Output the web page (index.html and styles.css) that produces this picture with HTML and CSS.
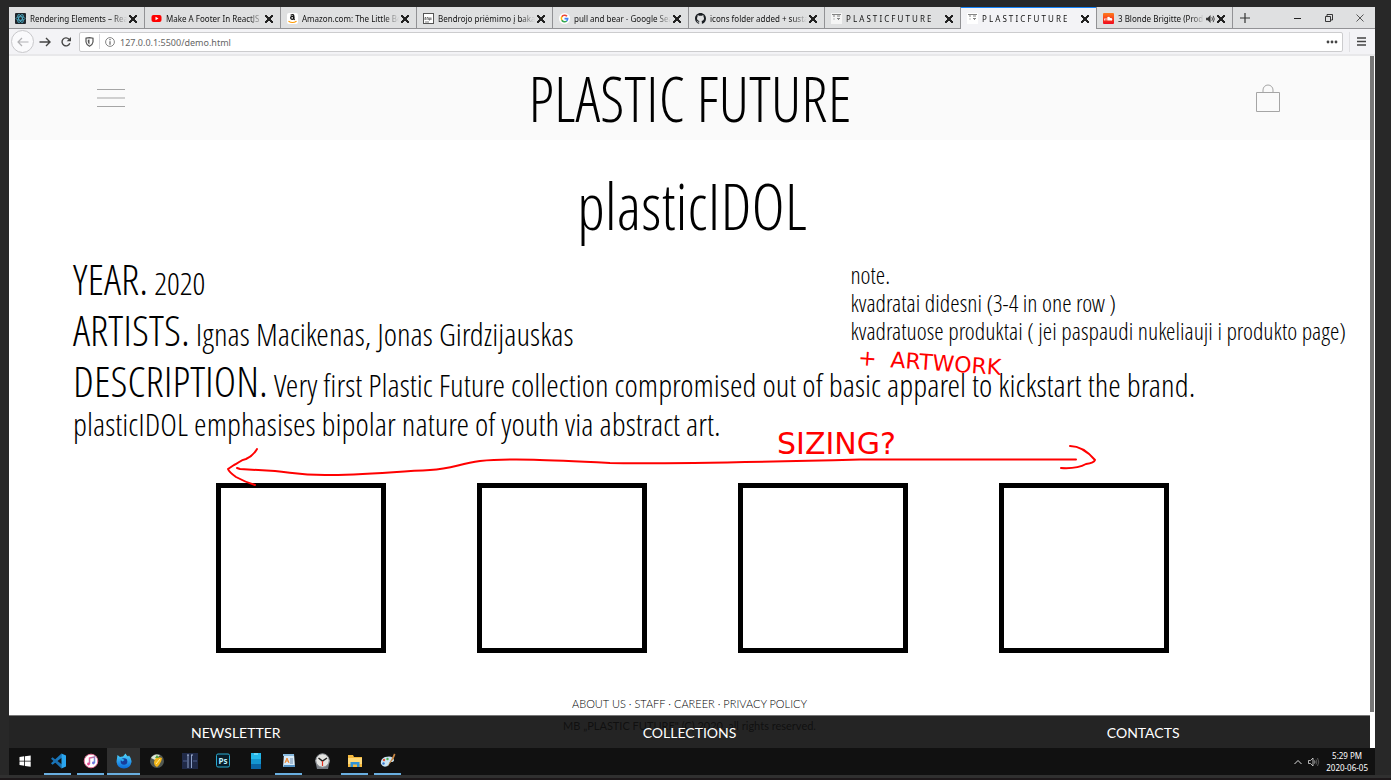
FILE: index.html
```html
<!DOCTYPE html>
<html lang="en">
<head>
<meta charset="utf-8">
<title>PLASTIC FUTURE</title>
<link rel="stylesheet" href="styles.css">
</head>
<body>
<div class="desktop">
  <div class="browser">
    <div class="tabs">
      <div class="tab"><svg class="fav" viewBox="0 0 11 11"><rect width="11" height="11" rx="1" fill="#20262b"/><g fill="none" stroke="#4fb3cc" stroke-width=".8"><ellipse cx="5.500" cy="5.500" rx="4.500" ry="1.800"/><ellipse cx="5.500" cy="5.500" rx="4.500" ry="1.800" transform="rotate(60 5.500 5.500)"/><ellipse cx="5.500" cy="5.500" rx="4.500" ry="1.800" transform="rotate(120 5.500 5.500)"/></g></svg><span class="label">Rendering Elements – React</span><button class="close" aria-label="Close tab"></button></div>
      <div class="tab"><svg class="fav" viewBox="0 0 11 11"><rect x=".5" y="2" width="10" height="7" rx="2" fill="#f00"/><path d="M4.500 3.800v3.400l3-1.700z" fill="#fff"/></svg><span class="label">Make A Footer In ReactJS | 2019</span><button class="close" aria-label="Close tab"></button></div>
      <div class="tab"><svg class="fav" viewBox="0 0 11 11"><rect width="11" height="11" rx="2" fill="#fff"/><circle cx="5.200" cy="4.800" r="1.500" fill="none" stroke="#111" stroke-width="1.300"/><path d="M3.600 2.300Q6.800.6 6.800 3v3l.9.8" fill="none" stroke="#111" stroke-width="1.300"/><path d="M1.500 8.200q4 2.600 8 0" fill="none" stroke="#f90" stroke-width="1.100"/></svg><span class="label">Amazon.com: The Little Book</span><button class="close" aria-label="Close tab"></button></div>
      <div class="tab"><svg class="fav" viewBox="0 0 11 11"><rect x=".5" y=".5" width="10" height="10" fill="#fff" stroke="#555"/><path d="M2 7V4.500h1V7m1-2.500h1V7m1-2.500V7h1V4.500m1 0V7M2 9h4" stroke="#444" stroke-width=".7" fill="none"/></svg><span class="label">Bendrojo priėmimo į bakalauro</span><button class="close" aria-label="Close tab"></button></div>
      <div class="tab"><svg class="fav" viewBox="0 0 11 11"><circle cx="5.500" cy="5.500" r="5.500" fill="#fff"/><g fill="none" stroke-width="1.600"><path d="M8 3.300A3.300 3.300 0 0 0 2.800 3.700" stroke="#ea4335"/><path d="M2.800 3.700a3.300 3.300 0 0 0 0 3.600" stroke="#fbbc05"/><path d="M2.800 7.300a3.300 3.300 0 0 0 4.900.7" stroke="#34a853"/><path d="M5.500 5.600h3.200a3.300 3.300 0 0 1-1 2.400" stroke="#4285f4"/></g></svg><span class="label">pull and bear - Google Search</span><button class="close" aria-label="Close tab"></button></div>
      <div class="tab"><svg class="fav" viewBox="0 0 16 16"><path fill="#1b1f23" d="M8 0C3.580 0 0 3.580 0 8c0 3.540 2.290 6.530 5.470 7.590.4.070.55-.17.55-.38 0-.19-.01-.82-.01-1.490-2.010.37-2.530-.49-2.690-.94-.09-.23-.48-.94-.82-1.130-.28-.15-.68-.52-.01-.53.63-.01 1.080.58 1.230.82.72 1.210 1.870.87 2.330.66.07-.52.28-.87.51-1.070-1.780-.2-3.640-.89-3.640-3.950 0-.87.31-1.590.82-2.150-.08-.2-.36-1.020.08-2.120 0 0 .67-.21 2.200.82a7.500 7.500 0 0 1 4 0c1.530-1.040 2.200-.82 2.200-.82.44 1.100.16 1.920.08 2.120.51.56.82 1.270.82 2.150 0 3.070-1.870 3.750-3.650 3.950.29.25.54.73.54 1.480 0 1.070-.01 1.930-.01 2.200 0 .21.15.46.55.38A8 8 0 0 0 16 8c0-4.420-3.580-8-8-8"/></svg><span class="label">icons folder added + sustainable</span><button class="close" aria-label="Close tab"></button></div>
      <div class="tab"><svg class="fav" viewBox="0 0 11 11"><rect width="11" height="11" fill="#f5f5f5"/><path d="M1 1.500h9M2 3h2m2 0h3M2.500 6h1M6 5.500h3M7 6.500h1" stroke="#777" stroke-width=".9"/></svg><span class="label">P L A S T I C F U T U R E</span><button class="close" aria-label="Close tab"></button></div>
      <div class="tab active"><svg class="fav" viewBox="0 0 11 11"><rect width="11" height="11" fill="#fff"/><path d="M1 1.500h9M2 3h2m2 0h3M2.500 6h1M6 5.500h3M7 6.500h1" stroke="#777" stroke-width=".9"/></svg><span class="label">P L A S T I C F U T U R E</span><button class="close" aria-label="Close tab"></button></div>
      <div class="tab"><svg class="fav" viewBox="0 0 11 11"><defs><linearGradient id="sc" x2="0" y2="1"><stop stop-color="#ff7a1c"/><stop offset="1" stop-color="#f00a1e"/></linearGradient></defs><rect width="11" height="11" rx="1" fill="url(#sc)"/><path d="M1.500 5.500v2M3 5v2.500" stroke="#fff" stroke-width=".8"/><path d="M4.300 7.600V4.300Q6.500 2.800 7 5q2.300-.3 2.300 1.300T8 7.600z" fill="#fff"/></svg><span class="label">3 Blonde Brigitte (Produced)</span><svg class="sound" viewBox="0 0 10 9"><path d="M0 3h2l3-3v9L2 6H0z" fill="#333"/><path d="M6.500 2.500q1.500 2 0 4M8 1q2.500 3.500 0 7" fill="none" stroke="#333"/></svg><button class="close" aria-label="Close tab"></button></div>
      <button class="newtab" aria-label="New tab"><svg width="10" height="10" viewBox="0 0 10 10"><path d="M5 0v10M0 5h10" stroke="#333" stroke-width="1.200"/></svg></button>
      <div class="winctl">
        <button aria-label="Minimize"><svg width="8" height="8" viewBox="0 0 8 8"><path d="M0 4.500h7" stroke="#222"/></svg></button>
        <button aria-label="Restore"><svg width="8" height="8" viewBox="0 0 8 8"><path d="M.5 2.500h5v5h-5zM2 2V.5h5.500V6H6" fill="none" stroke="#222" stroke-width=".9"/></svg></button>
        <button aria-label="Close"><svg width="8" height="8" viewBox="0 0 8 8"><path d="M.5.5l7 7m0-7l-7 7" stroke="#333" stroke-width=".8"/></svg></button>
      </div>
    </div>
    <div class="toolbar">
      <button class="back" aria-label="Back"><svg width="12" height="10" viewBox="0 0 12 10"><path d="M11.500 5H1M5 1L1 5l4 4" fill="none" stroke="#b0b0b3" stroke-width="1.200"/></svg></button>
      <button class="nav" aria-label="Forward"><svg width="12" height="10" viewBox="0 0 12 10"><path d="M.5 5H11M7 1l4 4-4 4" fill="none" stroke="#444" stroke-width="1.400"/></svg></button>
      <button class="nav" aria-label="Reload"><svg width="12" height="12" viewBox="0 0 12 12"><path d="M9.800 7.300A4 4 0 1 1 9 3.200" fill="none" stroke="#444" stroke-width="1.400"/><path d="M11 1v4.300H6.700z" fill="#444"/></svg></button>
      <div class="urlbar">
        <svg width="9" height="10" viewBox="0 0 9 10"><path d="M1 1.200L4.500.7 8 1.200V5Q7.500 8 4.500 9.300 1.500 8 1 5z" fill="none" stroke="#555" stroke-width="1.200"/><path d="M4.500 2.500v5Q2.800 6.500 2.800 4.800v-2z" fill="#555"/></svg>
        <i class="sep"></i>
        <svg width="10" height="10" viewBox="0 0 10 10"><circle cx="5" cy="5" r="4.400" fill="none" stroke="#777" stroke-width=".9"/><path d="M5 2v1.200M5 4.200v3.600" stroke="#666" stroke-width="1.200"/></svg>
        <input class="url" type="text" aria-label="Address" value="127.0.0.1:5500/demo.html">
        <button class="dots" aria-label="Page actions"><svg width="12" height="4" viewBox="0 0 12 4"><g fill="#444"><circle cx="2" cy="2" r="1.400"/><circle cx="6" cy="2" r="1.400"/><circle cx="10" cy="2" r="1.400"/></g></svg></button>
      </div>
      <button class="menu" aria-label="Application menu"><svg width="9" height="9" viewBox="0 0 9 9"><path d="M0 1h9M0 4.500h9M0 8h9" stroke="#444" stroke-width="1.300"/></svg></button>
    </div>

    <div class="page">
      <header class="site-head">
        <button aria-label="Menu"><svg width="28" height="20" viewBox="0 0 28 20"><path d="M0 1.500h28M0 10h28M0 18.500h28" stroke="#a5a5a5"/></svg></button>
        <a class="brand" href="#">PLASTIC FUTURE</a>
        <button aria-label="Shopping bag"><svg width="26" height="29" viewBox="0 0 26 29"><path d="M1.500 8.500h23v19h-23zM8 8.500V6a5 5 0 0 1 10 0v2.500" fill="none" stroke="#a5a5a5"/></svg></button>
      </header>
      <main>
        <h1>plasticIDOL</h1>
        <section class="info">
          <div class="facts">
            <p><b>YEAR.</b> 2020</p>
            <p><b>ARTISTS.</b> Ignas Macikenas, Jonas Girdzijauskas</p>
          </div>
          <div class="note">note.<br>kvadratai didesni (3-4 in one row )<br>kvadratuose produktai ( jei paspaudi nukeliauji i produkto page)</div>
          <p class="desc"><b>DESCRIPTION.</b> Very first Plastic Future collection compromised out of basic apparel to kickstart the brand.<br>plasticIDOL emphasises bipolar nature of youth via abstract art.</p>
        </section>
        <section class="squares"><div class="square"></div><div class="square"></div><div class="square"></div><div class="square"></div></section>
        <div class="legal">
          <nav><a href="#">ABOUT US</a> · <a href="#">STAFF</a> · <a href="#">CAREER</a> · <a href="#">PRIVACY POLICY</a></nav>
          <p>MB „PLASTIC FUTURE" (C) 2020, all rights reserved.</p>
        </div>
      </main>
      <footer class="bar"><a href="#">NEWSLETTER</a><a href="#">COLLECTIONS</a><a href="#">CONTACTS</a></footer>
      <div class="scroll"></div>
      <svg class="arrow" width="880" height="50" viewBox="220 440 880 50"><g fill="none" stroke="#f00" stroke-width="2" stroke-linecap="round" stroke-linejoin="round"><path d="M257 449Q253 456 246 459C240 460 239 463 234 465L228 469Q229 472 236 477 245 482 255 485"/><path d="M237 468L240 469 275 471C295 473 300 475 325 475 360 475 390 472 430 470 452 469 458 464 480 461 510 458 550 460 610 463 680 464 760 462 860 459.500H1076"/><path d="M1070 446Q1083 446 1095 460 1094 463 1086 464 1077 469 1061 468"/></g></svg>
      <div class="scribble artwork"><span>+</span><span>ARTWORK</span></div>
      <div class="scribble sizing">SIZING?</div>
    </div>
  </div>

  <div class="taskbar">
    <button aria-label="Start"><svg viewBox="0 0 16 16"><path fill="#fff" d="M2.500 4l4.700-.7v4.400H2.500zM8 3.200l5.700-.8v5.300H8zM2.500 8.400h4.700v4.400l-4.700-.7zM8 8.400h5.700v5.300L8 12.900z"/></svg></button>
    <button class="open" aria-label="Visual Studio Code"><svg viewBox="0 0 16 16"><path fill="#1878be" d="M11.500.5L1 10.200l1.500 1.600L12 4.500z"/><path fill="#1a6fb0" d="M2.500 4.200L1 5.700l10.500 9.800.5-4z"/><path fill="#2aa5ef" d="M11.500.5L16 2.500v11l-4.500 2z"/></svg></button>
    <button class="open" aria-label="iTunes"><svg viewBox="0 0 16 16"><defs><linearGradient id="it" x2="1" y2="1"><stop stop-color="#f5558a"/><stop offset="1" stop-color="#4aa8ee"/></linearGradient></defs><circle cx="8" cy="8" r="6.800" fill="#fff" stroke="#e9759c"/><path d="M6.500 11V5l5-1v6" fill="none" stroke="url(#it)" stroke-width="1.500"/><circle cx="5.500" cy="11" r="1.400" fill="#ec4b91"/><circle cx="10.400" cy="10" r="1.400" fill="#6f76df"/></svg></button>
    <button class="open current" aria-label="Firefox"><svg viewBox="0 0 16 16"><defs><linearGradient id="fx" x2="0" y2="1"><stop stop-color="#52d9ff"/><stop offset="1" stop-color="#0867d9"/></linearGradient></defs><path fill="url(#fx)" d="M1.500 2L4 4q1.500-.8 3-.5L9.500.5q1 2 2.500 3l1-1Q16 6 15.500 9 14.500 15 8 15.500 1 15 .5 8.500z"/><circle cx="8" cy="8.500" r="3.300" fill="#173c9a"/><path d="M3.500 6q3-1 5 1l-2 1.500z" fill="#28aef0"/></svg></button>
    <button aria-label="FL Studio"><svg viewBox="0 0 16 16"><circle cx="8" cy="8" r="7" fill="#515852"/><path d="M2 5q3-5 9-3L6 7z" fill="#dde8d8"/><path d="M6 6q3-3 7-1-1 6-5 9-3-1-3-5z" fill="#f4b619"/><path d="M6 5l2-3 2 3z" fill="#59a43c"/><path d="M7 11l4-5" stroke="#fff3a1"/></svg></button>
    <button aria-label="Game"><svg viewBox="0 0 16 16"><rect width="16" height="16" fill="#202a48"/><path d="M6 2v13M9.500 2v13" stroke="#8da0c8" stroke-width="1"/><path d="M5 2h2M9 2h2" stroke="#a9b7d6"/><path d="M1 8h4m6 0h4" stroke="#4e5f8e"/></svg></button>
    <button aria-label="Photoshop"><svg viewBox="0 0 16 16"><rect x="1.500" y="1" width="13" height="13" rx="1.500" fill="#071c28" stroke="#2aabd0"/><text x="3.500" y="10.500" class="ps">Ps</text></svg></button>
    <button aria-label="Your Phone"><svg viewBox="0 0 16 16"><path d="M3 0h10v16H3z" fill="#24b7e9"/><path d="M3 6h10v5H3z" fill="#1496d0"/><path d="M3 11h10v5H3z" fill="#0a65a5"/><path d="M6 1h4" stroke="#a6efff"/></svg></button>
    <button class="open" aria-label="WordPad"><svg viewBox="0 0 16 16"><path d="M3 1h10l1 13H2z" fill="#d9ebf8"/><path d="M2 1h11v2H2z" fill="#87b9de"/><path d="M3 12h11v2H2z" fill="#5591c2"/><path d="M4 10l2-5 2 5M4.700 8h2.500" stroke="#f18428" fill="none"/><path d="M9 6h3M9 8h3M9 10h3" stroke="#5878a0" stroke-width=".8"/></svg></button>
    <button aria-label="Clock"><svg viewBox="0 0 16 16"><path d="M1 7l2 9h11l2-9z" fill="#777c83"/><circle cx="8.500" cy="7.500" r="6.700" fill="#e4e4e1" stroke="#8b8f94"/><path d="M4.500 5l4 3L13 5" fill="none" stroke="#222" stroke-width="1.500"/><path d="M8.500 8v5" stroke="#e03020" stroke-width="1.200"/></svg></button>
    <button class="open" aria-label="File Explorer"><svg viewBox="0 0 16 16"><path d="M1 2h5l1 2h8v10H1z" fill="#f5b93e"/><path d="M1 5h14v6H1z" fill="#ffd978"/><path d="M3.500 14V9h9v5h-2.500v-2.500H6V14z" fill="#3193d5"/></svg></button>
    <button class="open" aria-label="Paint"><svg viewBox="0 0 16 16"><path d="M1 11Q0 6 5 4q8-2 9 3 0 2-3 2-2 0-2 3-5 4-8-1" fill="#c9e4f3"/><circle cx="4" cy="7" r="1.200" fill="#e45637"/><circle cx="7.500" cy="6" r="1.200" fill="#50ad51"/><circle cx="3.500" cy="10.500" r="1.200" fill="#3778ce"/><path d="M7 14l5-9 2-4.500 1.500 1-2 4.500z" fill="#c98743"/></svg></button>
    <div class="tray">
      <svg width="8" height="6" viewBox="0 0 8 6"><path d="M.5 5L4 1.500 7.500 5" fill="none" stroke="#ddd"/></svg>
      <svg width="12" height="10" viewBox="0 0 12 10"><path d="M.5 3.500h2L5 1v8L2.500 6.500h-2z" fill="none" stroke="#ddd" stroke-width=".8"/><path d="M6.500 3.500q1 1.500 0 3" fill="none" stroke="#ccc" stroke-width=".8"/><path d="M8 2.500q1.700 2.500 0 5M9.500 1q2.600 4 0 8" fill="none" stroke="#777" stroke-width=".7"/></svg>
      <time>5:29 PM<br>2020-06-05</time>
    </div>
  </div>
  <div class="edge"></div>
</div>
</body>
</html>
```
FILE: styles.css
```css
* { box-sizing: border-box; }
body { margin: 0; background: #282828; font-family: "Noto Sans", sans-serif; }
button { display: flex; align-items: center; justify-content: center; padding: 0; border: 0; background: none; }
a { color: inherit; text-decoration: none; }
p, h1 { margin: 0; }

.desktop { display: flex; flex-direction: column; min-height: 100vh; padding-top: 7px; }
.browser { display: flex; flex-direction: column; flex: 1; margin: 0 16px 0 9px; background: #f3f3f6; }

.tabs { display: flex; height: 22px; background: #dfe0e1; box-shadow: inset 0 -1px #929295; }
.tab { display: flex; align-items: center; flex: 0 1 136px; min-width: 0; padding: 1px 7px 0 6px; border-right: 1px solid #929295; font-size: 8px; line-height: 20px; color: #111; }
.tab.active { background: #f3f3f6; box-shadow: inset 0 1px #1683f8; }
.fav { flex: none; width: 11px; height: 11px; margin-right: 4px; }
.label { flex: 1; overflow: hidden; white-space: nowrap; -webkit-mask-image: linear-gradient(to right, #000 85%, transparent); mask-image: linear-gradient(to right, #000 85%, transparent); }
.close { flex: none; width: 8px; height: 8px; margin-left: 2px; background: linear-gradient(45deg, transparent 43%, #222 43% 57%, transparent 57%), linear-gradient(-45deg, transparent 43%, #222 43% 57%, transparent 57%); }
.sound { flex: none; width: 9px; height: 8px; margin-left: 2px; }
.newtab { width: 24px; }
.winctl { display: flex; margin-left: auto; }
.winctl button { width: 31px; }

.toolbar { display: flex; align-items: center; height: 27px; padding: 0 2px; border-bottom: 2px solid #e8e8ea; }
.back { width: 23px; height: 23px; border: 1px solid #c8c8cb; border-radius: 50%; background: #fafafc; }
.nav { width: 21px; height: 22px; }
.urlbar { display: flex; align-items: center; flex: 1; height: 20px; margin: 0 4px 0 3px; padding: 0 4px 0 5px; gap: 5px; border: 1px solid #ccccce; border-radius: 2px; background: #fff; }
.sep { width: 1px; height: 15px; background: #d7d7db; }
.url { flex: 1; min-width: 0; padding: 2px 0 0; border: 0; outline: 0; background: none; font: 9px "Noto Sans", sans-serif; color: #666; }
.dots { width: 13px; }
.menu { width: 24px; height: 20px; margin-left: 2px; border-left: 1px solid #e0e0e3; }

.page { position: relative; flex: 1; display: flex; flex-direction: column; background: #fff; color: #000; font-family: "Open Sans Condensed Light", "Open Sans Condensed", "Open Sans", sans-serif; font-weight: 300; }
.site-head { display: flex; align-items: center; justify-content: space-between; height: 84px; padding: 0 94px 0 88px; background: #fafafa; }
.brand { font-size: 62px; line-height: 84px; }
main { flex: 1; display: flex; flex-direction: column; }
h1 { margin-top: 20px; font-size: 64px; line-height: 92px; font-weight: 300; text-align: center; }
.info { display: grid; grid-template-columns: 1fr auto; padding: 0 29px 0 64px; font-size: 32px; line-height: 38px; }
.info p { padding-top: 3px; }
.info b { font-size: 43px; line-height: 48px; font-weight: 300; }
.note { padding-top: 9px; font-size: 24px; line-height: 28px; }
.desc { grid-column: 1 / -1; }
.squares { display: flex; justify-content: center; gap: 91px; margin-top: 40px; }
.square { width: 170px; height: 170px; border: 5px solid #000; }
.legal { margin-top: auto; padding: 0 5px 11px 0; font: 11px/22px Lato, sans-serif; text-align: center; }
.legal nav { font-weight: 300; }
.bar { position: absolute; left: 0; right: 5px; bottom: 0; display: grid; grid-template-columns: repeat(3, 1fr); height: 33px; padding-top: 1px; border-top: 1px solid #777; background: rgba(17, 17, 17, 0.92); color: #fff; font: 14px/32px Lato, sans-serif; text-align: center; }
.scroll { position: absolute; top: 0; right: 1px; width: 4px; height: 656px; background: #777; }
.arrow { position: absolute; top: 384px; left: 211px; }
.scribble { position: absolute; color: #f00; font-family: "DejaVu Sans", sans-serif; font-weight: 400; }
.artwork { top: 294px; left: 849px; display: flex; gap: 14px; font-size: 22px; line-height: 26px; transform: rotate(4deg); }
.sizing { top: 371px; left: 768px; font-size: 30px; line-height: 34px; }

.taskbar { display: flex; gap: 6px; height: 27px; margin: 0 16px 0 9px; padding-left: 2px; background: #111; }
.taskbar button { width: 27px; border-bottom: 2px solid transparent; background-clip: padding-box; }
.taskbar button svg { width: 16px; height: 16px; }
.taskbar .open { border-bottom-color: #69aee0; }
.taskbar .current { width: 33px; margin: 0 -3px; background-color: #303030; }
.ps { font: 700 8px "Noto Sans", sans-serif; fill: #bff0ff; }
.tray { display: flex; align-items: center; gap: 6px; margin-left: auto; padding-right: 7px; color: #fff; font-size: 8px; line-height: 12px; text-align: center; }
.edge { height: 5px; background: #303030; border-bottom: 2px solid #1d181a; }
```
